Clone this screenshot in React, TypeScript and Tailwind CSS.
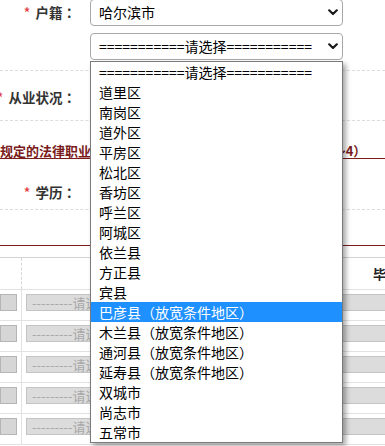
import React from "react";

const OPTIONS = [
  "===========请选择===========",
  "道里区",
  "南岗区",
  "道外区",
  "平房区",
  "松北区",
  "香坊区",
  "呼兰区",
  "阿城区",
  "依兰县",
  "方正县",
  "宾县",
  "巴彦县（放宽条件地区）",
  "木兰县（放宽条件地区）",
  "通河县（放宽条件地区）",
  "延寿县（放宽条件地区）",
  "双城市",
  "尚志市",
  "五常市",
];

function Chevron() {
  return (
    <svg width="10" height="7" viewBox="0 0 10 7" className="shrink-0">
      <polyline points="1.2,1.3 5,5 8.8,1.3" fill="none" stroke="#1a1a1a" strokeWidth="2.2" strokeLinecap="round" strokeLinejoin="round" />
    </svg>
  );
}

function Sel({ text }: { text: string }) {
  return (
    <div className="h-[27px] w-[253px] rounded-[4px] border border-[#a8a8a8] bg-white flex items-center pl-[8px] pr-[4px] text-[14px] text-black">
      <span className="flex-1 whitespace-nowrap overflow-hidden">{text}</span>
      <Chevron />
    </div>
  );
}

function Label({ text }: { text: string }) {
  return (
    <div className="w-[90px] shrink-0 flex justify-end items-center pr-[14px] whitespace-nowrap">
      <span className="text-[#e0383e] text-[15px] mr-[5px] relative top-[1px]">*</span>
      <span className="text-[13.5px] font-bold text-[#333]">
        {text}
        <span className="font-['Noto_Sans_CJK_JP',sans-serif]">：</span>
      </span>
    </div>
  );
}

function BodyRow() {
  return (
    <div className="flex h-[31px] border-b border-[#e2e2e2]">
      <div className="w-[22px] shrink-0 border-r border-[#e2e2e2] pt-[4px]">
        <div className="w-[17px] h-[17px] bg-[#d6d6d6] border border-[#b5b5b5]" />
      </div>
      <div className="pl-[4px] pt-[4px]">
        <div className="w-[500px] h-[17px] bg-[#dcdcdc] border border-[#c4c4c4] text-[13px] leading-[15px] text-[#a8a8a8] pl-[5px] whitespace-nowrap">
          ---------请选择---------
        </div>
      </div>
    </div>
  );
}

export default function App() {
  return (
    <div className="relative w-[385px] h-[446px] overflow-hidden bg-white font-['Noto_Sans_CJK_SC',sans-serif]">
      <div className="w-[385px]">
        {/* 户籍 */}
        <div className="flex mt-[-1px] pb-[10px] border-b border-dashed border-[#dcdcdc]">
          <div className="h-[27px] flex">
            <Label text="户籍" />
          </div>
          <div className="flex flex-col gap-[7px]">
            <Sel text="哈尔滨市" />
            <Sel text="===========请选择===========" />
          </div>
        </div>
        {/* 从业状况 */}
        <div className="flex h-[50px] pt-[3px] border-b border-dashed border-[#dcdcdc]">
          <Label text="从业状况" />
        </div>
        {/* red notice */}
        <div className="h-[38px] pt-[16px] border-b border-[#7a1c1c] whitespace-nowrap overflow-hidden">
          <span className="text-[13px] leading-[20px] font-bold text-[#7a1c1c]">
            规定的法律职业资格考试报名学历条件，学历信息可填写1～4）
          </span>
        </div>
        {/* 学历 */}
        <div className="flex h-[51px] pt-[16px] border-b border-dashed border-[#dcdcdc]">
          <Label text="学历" />
        </div>
        <div className="h-[35px]" />
        <div className="h-[1px] bg-[#7a1c1c]" />
        <div className="h-[11px]" />
        {/* table */}
        <div className="border-t border-[#d4d4d4]">
          <div className="flex h-[32px] border-b border-[#e2e2e2]">
            <div className="w-[22px] shrink-0 border-r border-dashed border-[#d8d8d8]" />
            <div className="flex items-center pl-[351px] whitespace-nowrap text-[13px] font-bold text-[#222]">
              毕业院校
            </div>
          </div>
          <BodyRow />
          <BodyRow />
          <BodyRow />
          <BodyRow />
          <BodyRow />
        </div>
      </div>

      {/* open dropdown list */}
      <div className="absolute left-[90px] top-[61px] w-[253px] border border-[#7a7a7a] bg-white shadow-[3px_3px_5px_rgba(0,0,0,0.35)]">
        {OPTIONS.map((o, i) => (
          <div
            key={i}
            className={
              i === 12
                ? "h-[20px] leading-[20px] pl-[8px] text-[14px] whitespace-nowrap bg-[#1e90ff] text-white"
                : "h-[20px] leading-[20px] pl-[8px] text-[14px] whitespace-nowrap text-black"
            }
          >
            {o}
          </div>
        ))}
      </div>
    </div>
  );
}
